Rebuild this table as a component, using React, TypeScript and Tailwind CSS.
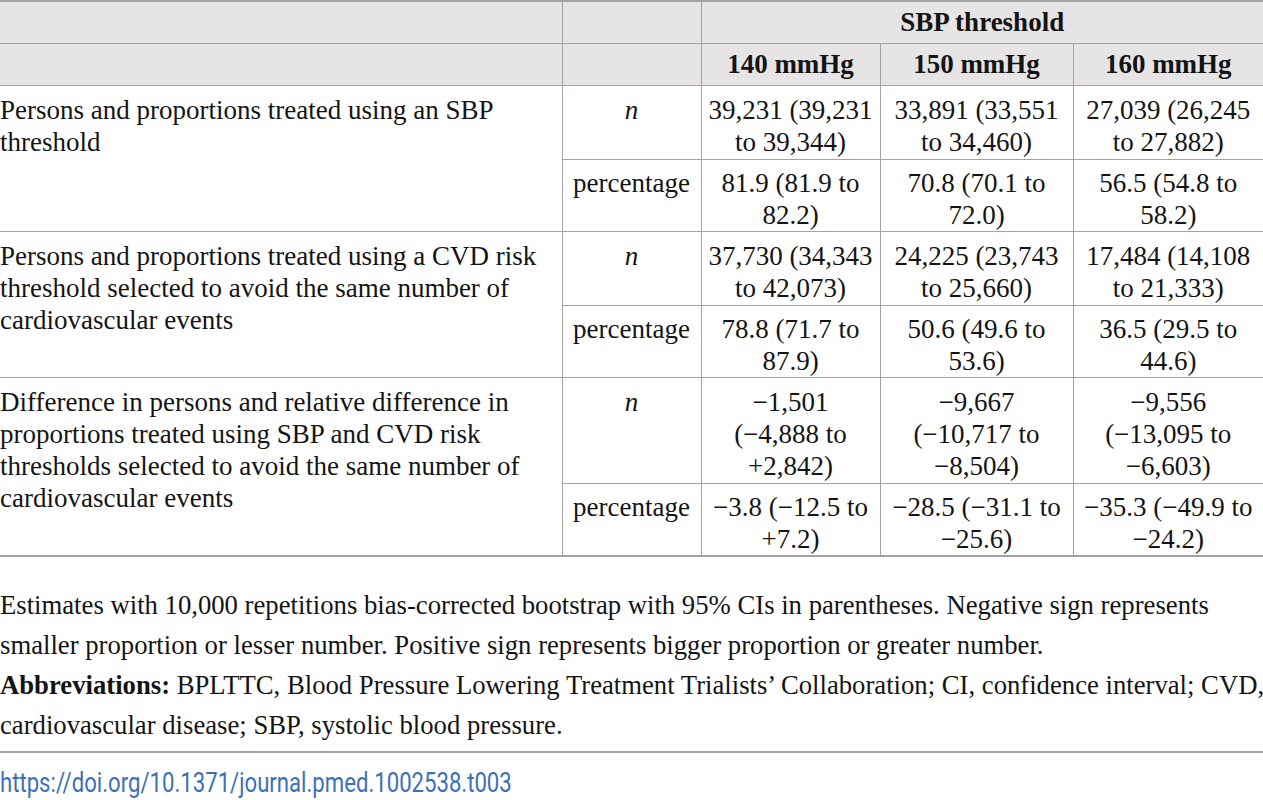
import { Fragment } from 'react'

const M = '\u2212'

const rows = [
  {
    label: ['Persons and proportions treated using an SBP', 'threshold'],
    n: [
      ['39,231 (39,231', 'to 39,344)'],
      ['33,891 (33,551', 'to 34,460)'],
      ['27,039 (26,245', 'to 27,882)'],
    ],
    pct: [
      ['81.9 (81.9 to', '82.2)'],
      ['70.8 (70.1 to', '72.0)'],
      ['56.5 (54.8 to', '58.2)'],
    ],
  },
  {
    label: ['Persons and proportions treated using a CVD risk', 'threshold selected to avoid the same number of', 'cardiovascular events'],
    n: [
      ['37,730 (34,343', 'to 42,073)'],
      ['24,225 (23,743', 'to 25,660)'],
      ['17,484 (14,108', 'to 21,333)'],
    ],
    pct: [
      ['78.8 (71.7 to', '87.9)'],
      ['50.6 (49.6 to', '53.6)'],
      ['36.5 (29.5 to', '44.6)'],
    ],
  },
  {
    label: [
      'Difference in persons and relative difference in',
      'proportions treated using SBP and CVD risk',
      'thresholds selected to avoid the same number of',
      'cardiovascular events',
    ],
    n: [
      [`${M}1,501`, `(${M}4,888 to`, '+2,842)'],
      [`${M}9,667`, `(${M}10,717 to`, `${M}8,504)`],
      [`${M}9,556`, `(${M}13,095 to`, `${M}6,603)`],
    ],
    pct: [
      [`${M}3.8 (${M}12.5 to`, '+7.2)'],
      [`${M}28.5 (${M}31.1 to`, `${M}25.6)`],
      [`${M}35.3 (${M}49.9 to`, `${M}24.2)`],
    ],
  },
]

const Lines = ({ lines }: { lines: string[] }) => (
  <>
    {lines.map((l, i) => (
      <span key={i} className="block whitespace-nowrap">
        {l}
      </span>
    ))}
  </>
)

const cell = 'border border-[#a3a3a3] align-top px-[6px] pt-[8px] pb-[1px]'
const pcell = 'border border-[#a3a3a3] align-top px-[6px] pt-[7px] pb-0'
const head = 'border border-[#a3a3a3] align-middle px-[6px] py-0'

export default function App() {
  return (
    <div className="w-[1263px] h-[800px] overflow-hidden bg-white text-[#141414] font-['Liberation_Serif',serif] text-[27px] leading-[32px]">
      <table className="w-full table-fixed border-collapse border-t-2 border-b-2 border-[#a3a3a3]">
        <colgroup>
          <col className="w-[562px]" />
          <col className="w-[139px]" />
          <col className="w-[179px]" />
          <col className="w-[193px]" />
          <col />
        </colgroup>
        <thead className="bg-[#e6e4e5] font-bold">
          <tr className="h-[42px]">
            <th className={`${head} border-l-0`} />
            <th className={head} />
            <th colSpan={3} className={`${head} border-r-0 text-center`}>
              SBP threshold
            </th>
          </tr>
          <tr className="h-[42px]">
            <th className={`${head} border-l-0`} />
            <th className={head} />
            <th className={`${head} text-center`}>140 mmHg</th>
            <th className={`${head} text-center`}>150 mmHg</th>
            <th className={`${head} border-r-0 text-center`}>160 mmHg</th>
          </tr>
        </thead>
        <tbody>
          {rows.map((r, ri) => (
            <Fragment key={ri}>
              <tr>
                <td rowSpan={2} className={`${cell} border-l-0 pl-0 text-left`}>
                  <Lines lines={r.label} />
                </td>
                <td className={`${cell} text-center italic`}>n</td>
                {r.n.map((v, i) => (
                  <td key={i} className={`${cell} text-center ${i === 2 ? 'border-r-0' : ''}`}>
                    <Lines lines={v} />
                  </td>
                ))}
              </tr>
              <tr>
                <td className={`${pcell} px-0 text-center`}>percentage</td>
                {r.pct.map((v, i) => (
                  <td key={i} className={`${pcell} text-center ${i === 2 ? 'border-r-0' : ''}`}>
                    <Lines lines={v} />
                  </td>
                ))}
              </tr>
            </Fragment>
          ))}
        </tbody>
      </table>
      <div className="pt-[28px] pb-[6px] text-[26.7px] leading-[40px] border-b-2 border-[#a3a3a3]">
        <p className="whitespace-nowrap">
          Estimates with 10,000 repetitions bias-corrected bootstrap with 95% CIs in parentheses. Negative sign represents
          <br />
          smaller proportion or lesser number. Positive sign represents bigger proportion or greater number.
        </p>
        <p className="whitespace-nowrap">
          <span className="font-bold">Abbreviations:</span> BPLTTC, Blood Pressure Lowering Treatment Trialists’
          Collaboration; CI, confidence interval; CVD,
          <br />
          cardiovascular disease; SBP, systolic blood pressure.
        </p>
      </div>
      <div className="pt-[14px]">
        <a
          href="#"
          className="inline-block origin-left scale-x-[0.82] whitespace-nowrap text-[#3d6fb6] font-['Roboto',sans-serif] text-[27px] leading-[30px]"
        >
          https://doi.org/10.1371/journal.pmed.1002538.t003
        </a>
      </div>
    </div>
  )
}
